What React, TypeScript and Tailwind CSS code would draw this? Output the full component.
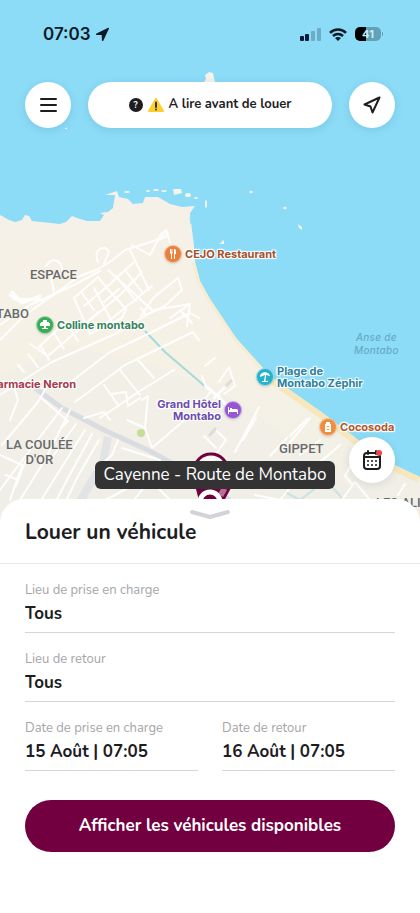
import type { ReactNode } from "react";

const halo =
  "[text-shadow:0_0_2px_#fff,0_0_2px_#fff,1px_1px_1px_#fff,-1px_-1px_1px_#fff,1px_-1px_1px_#fff,-1px_1px_1px_#fff]";
const district =
  "absolute text-center text-[13px] leading-[15px] font-medium whitespace-nowrap text-[#68696b] font-['Roboto',sans-serif]";
const poi = "absolute flex items-center gap-[3px] whitespace-nowrap text-[11px] leading-3 font-bold font-['Inter',sans-serif]";

function MapCanvas() {
  return (
    <svg
      className="absolute inset-0 h-full w-full"
      viewBox="0 0 420 523"
      preserveAspectRatio="xMidYMin slice"
      fill="none"
      aria-hidden="true"
    >
      <defs>
        <linearGradient id="land" x1="0" y1="200" x2="0" y2="520" gradientUnits="userSpaceOnUse">
          <stop stopColor="#f6f1e8" />
          <stop offset="0.5" stopColor="#f5f1e5" />
          <stop offset="1" stopColor="#f1efe6" />
        </linearGradient>
        <clipPath id="coast">
          <path d="M0 215 9 220 15 222 22 220 25 215 29 216 32 221 60 224 66 222 72 216 80 219 87 221 100 221 104 215 100 213 108 212 113 208 115 195 105 195 117 191 119 197 128 199 133 204 143 203 145 197 158 197 170 204 182 207 195 206 190 213 192 230 194 246 195 262 200 281 210 299 236 338 270 376 320 411 357 439 388 462 420 477V523H0Z" />
        </clipPath>
      </defs>
      <rect width="420" height="523" fill="#8cdcf7" />
      <g clipPath="url(#coast)">
        <rect width="420" height="523" fill="url(#land)" />
        <path d="M195 262 200 281 210 299 236 338 270 376" stroke="#f8ecd0" strokeWidth="6" />
        <path d="M270 376 320 411 357 439 388 462 420 477" stroke="#f8e6bd" strokeWidth="12" />
        <path d="M0 375 70 345 150 365 220 390 290 440 340 480 420 523H0Z" fill="#eeede9" opacity=".4" />
        <path d="M145 331 165 352 207 388" stroke="#a5d9da" strokeWidth="2" />
        <path d="M285 492 300 500 326 480 348 505 390 515" stroke="#c9e2e2" strokeWidth="2" />

        {/* main avenue */}
        <path d="M35 388 62 408 108 432 150 451 205 482 260 523" stroke="#d9dce0" strokeWidth="5" strokeLinejoin="round" />
        <path d="M108 437 103 462 78 505" stroke="#e2e3e5" strokeWidth="8" />

        {/* streets */}
        <g stroke="#fff" strokeOpacity=".9" strokeWidth="2" strokeLinejoin="round" strokeLinecap="round">
          <path d="M0 340 25 315 80 276 96 270 110 262 125 250 154 241 168 232" />
          <path d="M0 325 30 305 74 285 100 271" />
          <path d="M132 245 150 255 158 240 168 236M160 235 166 230 170 242" />
          <path d="M98 262C92 248 106 244 109 252L104 264" />
          <path d="M46 266C52 256 63 260 62 272M50 272 54 292" />
          <path d="M10 295 22 303 40 296M14 299 42 300M12 292 20 300" strokeWidth="3" />
          <path d="M74 298 98 277 106 287 126 309 122 318 90 334 74 298Z" />
          <path d="M108 270 152 310M130 250 149 290M84 306 110 284 134 262M90 320 120 295 142 272M100 328 152 286" />
          <path d="M82 293 94 310M94 288 112 322M104 302 119 289M116 276 136 301M125 270 142 292" />
          <path d="M141 316 154 297 178 278 182 290 165 306 146 315 141 308" />
          <path d="M38 348 65 322 80 329 98 312M30 344 48 356 90 320" />
          <path d="M0 395 52 362 115 334 155 310 190 304" />
          <path d="M18 365 24 372M28 354 38 367M40 345 49 360M54 333 64 349M68 325 78 341" />
          <path d="M60 390 110 352 140 338 190 313 199 318" />
          <path d="M75 402 125 365 193 332 199 340" />
          <path d="M100 418 140 391 174 370M120 370 140 395M138 360 154 378M104 385 119 406M111 394 126 392 128 406 140 398" />
          <path d="M142 400 148 396 145 428 152 448 188 417M145 428 127 420" />
          <path d="M170 318 190 304 187 326M180 310 192 323" />
          <path d="M205 366 215 358M202 376 206 388 220 396M219 382 229 367 235 386 224 394M212 390 206 398" />
          <path d="M214 398 224 388M206 386 226 404" strokeWidth="3" />
          <path d="M204 436 216 448M216 430 226 440 210 462M235 452 259 407M243 440 256 418M284 450 310 418M290 436 307 419M270 456 287 438" />
          <path d="M45 390 38 402 2 445M10 420 18 400 12 380M62 408 30 450 0 490" />
          <path d="M40 397 68 421 62 427M70 410 45 460 20 500" />
          <path d="M85 430 60 470 38 505M92 434 68 478 54 505M99 440 78 476 64 505M76 424 50 460" />
          <path d="M0 455 22 465 10 500M5 475 16 479M26 460 16 486" />
          <path d="M84 418 104 412 110 420M118 440 112 455 95 470M122 448 160 460" />
          <path d="M130 505 150 480 170 500M96 505 128 488M255 495 280 500 296 480M338 505 355 482 370 500M352 484 345 476 351 465M398 495 405 484M320 462 340 445M300 455 320 440" />
        </g>
        <path d="M226 386 232 380M209 436 216 428" stroke="#dcdcd8" strokeWidth="3" />
        <circle cx="141" cy="433" r="4" fill="#c5df9b" />
      </g>

      {/* reefs */}
      <g fill="#f6f3e9">
        <path d="M204 82 206 79 205 75 209 72 213 73 215 82Z" />
        <ellipse cx="127" cy="192" rx="3" ry="1" />
        <ellipse cx="148" cy="191" rx="2" ry="1" />
        <ellipse cx="156" cy="190" rx="3" ry="1" />
        <ellipse cx="164" cy="191" rx="3" ry="1" />
        <path d="M173 189h8l1 4-8 2Z" />
        <ellipse cx="188" cy="195" rx="3" ry="2" />
        <ellipse cx="196" cy="198" rx="2" ry="1" />
        <ellipse cx="206" cy="204" rx="1" ry="4" />
        <ellipse cx="251" cy="192" rx="2" ry="1" />
        <ellipse cx="285" cy="208" rx="2" ry="1" />
        <path d="m298 224 4 3v3l-3-2ZM222 240l2 1v3h-5l3-2ZM65 128h2v1h-2Z" />
      </g>
      <path d="M193 210 190 218 191 224" stroke="#8cdcf7" />
    </svg>
  );
}

function Pin({ className, children }: { className: string; children: ReactNode }) {
  return (
    <span className={`flex size-[18px] shrink-0 items-center justify-center rounded-full border border-white/50 shadow-sm ${className}`}>
      <svg className="size-3" viewBox="0 0 12 12" fill="#fff" stroke="none" aria-hidden="true">
        {children}
      </svg>
    </span>
  );
}

function Places() {
  return (
    <>
      <span className={`${district} left-[30px] top-[267px]`}>ESPACE</span>
      <span className={`${district} right-[calc(100%-29px)] top-[306px]`}>MONTABO</span>
      <span className={`${district} left-[6px] top-[437px]`}>
        LA COULÉE
        <br />
        D'OR
      </span>
      <span className={`${district} left-[279px] top-[441px]`}>GIPPET</span>
      <span className={`${district} left-[376px] top-[495px]`}>LES ALIZÉS</span>
      <span className="absolute left-[354px] top-[331px] text-center font-['Inter',sans-serif] text-[10px] leading-[13px] font-medium tracking-wide whitespace-nowrap text-[#68abc8] italic">
        Anse de
        <br />
        Montabo
      </span>

      <div className={`${poi} ${halo} left-[164px] top-[245px] text-[#a4512b]`}>
        <Pin className="bg-[#e9813c]">
          <path d="M3 1h1v3h.5V1h1v4L5 6v5H4V6L3 5ZM7 1c2 0 2 1 2 5H8v5H7Z" />
        </Pin>
        CEJO Restaurant
      </div>
      <div className={`${poi} ${halo} left-[36px] top-[316px] text-[#34835a]`}>
        <Pin className="bg-[#3bac56]">
          <path d="M4 1h4v2h2v1h1v3H7v2h2v1H3V9h2V7H1V4h1V3h2Z" />
        </Pin>
        Colline montabo
      </div>
      <div className={`${poi} ${halo} right-[calc(100%-76px)] top-[378px] text-[#a63a4b]`}>Pharmacie Neron</div>
      <div className={`${poi} ${halo} left-[256px] top-[365px] text-[#2b7f9f]`}>
        <Pin className="bg-[#28b1cb]">
          <path d="M1 6c0-6 9-6 10-1L7 4l-.5 6H9v1H3v-1h2l1-6Z" />
        </Pin>
        <span>
          Plage de
          <br />
          Montabo Zéphir
        </span>
      </div>
      <div className={`${poi} ${halo} right-[calc(100%-242px)] top-[398px] text-right text-[#6b4bb0]`}>
        <span>
          Grand Hôtel
          <br />
          Montabo
        </span>
        <Pin className="bg-[#9557d3]">
          <path d="M1 3h1v3h1V4h2v1h5l1 1v4h-1V8H2v2H1Z" />
        </Pin>
      </div>
      <div className={`${poi} ${halo} left-[319px] top-[418px] text-[#b0582b]`}>
        <Pin className="bg-[#ef8f3e]">
          <path d="M3 3h1V1h4v2h1v8H3Zm2 2v1h2V5Zm0 3v1h2V8Z" />
        </Pin>
        Cocosoda
      </div>
    </>
  );
}

function StatusBar() {
  return (
    <div className="mb-[38px] flex h-5 items-center justify-between pr-3 pl-[18px] text-[#0b1a24]">
      <div className="flex items-center gap-1 font-['Inter',sans-serif] text-[17px] leading-5 font-semibold">
        07:03
        <svg className="size-[15px]" viewBox="0 0 15 15" fill="currentColor" aria-hidden="true">
          <path d="M14 1.5c.2-.5-.2-.9-.7-.7L1.500 6.400c-.9.4-.6 1.500.2 1.500l5 .2.200 5.200c0 .9 1.200 1 1.500.2Z" />
        </svg>
      </div>
      <div className="flex items-center gap-2">
        <svg className="h-[13px] w-[21px]" viewBox="0 0 21 13" fill="#0b1a3a" aria-hidden="true">
          <rect y="8" width="4" height="5" rx="1" />
          <rect x="5" y="6" width="4" height="7" rx="1" />
          <rect x="11" y="3" width="4" height="10" rx="1" opacity=".25" />
          <rect x="17" width="4" height="13" rx="1" opacity=".25" />
        </svg>
        <svg className="h-[13px] w-[18px]" viewBox="0 0 18 13" fill="none" stroke="currentColor" strokeWidth="2.500" aria-hidden="true">
          <path d="M1 4.800C5.500.4 12.500.4 17 4.800M4 8c2.800-2.800 7.200-2.800 10 0" />
          <path d="M9 13 6 10c1.700-1.500 4.300-1.500 6 0Z" fill="currentColor" stroke="none" />
        </svg>
        <div className="flex items-center gap-px">
          <span className="flex h-[14px] w-[26px] items-center justify-center rounded-[5px] bg-linear-to-r from-black from-42% to-[#62a2b8] to-42% font-['Inter',sans-serif] text-[11px] leading-3 font-bold text-[#c9ecf7]">
            41
          </span>
          <span className="h-1 w-px rounded-r bg-[#62a2b8]" />
        </div>
      </div>
    </div>
  );
}

const fab = "flex size-[46px] shrink-0 items-center justify-center rounded-full bg-white shadow-[0_2px_10px_rgba(0,60,90,0.12)]";

function TopBar() {
  return (
    <div className="flex gap-[17px]">
      <button className={fab} aria-label="Menu">
        <svg className="size-[18px]" viewBox="0 0 18 18" stroke="#1d1d1f" strokeWidth="2" strokeLinecap="round" aria-hidden="true">
          <path d="M2 3h15M2 9h15M2 15h15" />
        </svg>
      </button>
      <button className="flex h-[46px] flex-1 items-center justify-center gap-[5px] rounded-full bg-white text-[13px] font-bold shadow-[0_2px_10px_rgba(0,60,90,0.12)]">
        <span className="flex size-[14px] items-center justify-center rounded-full bg-[#1d1d1f] text-[9px] leading-none text-white">?</span>
        <svg className="h-[14px] w-4" viewBox="0 0 16 14" aria-hidden="true">
          <path d="M8 1 15 13H1Z" fill="#fbd02e" stroke="#fbd02e" strokeWidth="2" strokeLinejoin="round" />
          <path d="M8 4.500v4.500" stroke="#333" strokeWidth="2" strokeLinecap="round" />
          <circle cx="8" cy="11.500" r="1" fill="#333" />
        </svg>
        A lire avant de louer
      </button>
      <button className={fab} aria-label="Ma position">
        <svg className="size-[18px]" viewBox="0 0 18 18" fill="none" stroke="#1d1d1f" strokeWidth="2" strokeLinejoin="round" aria-hidden="true">
          <path d="M16.500 1.500 1.500 8.500 7.500 10.500 9.500 16.500Z" />
        </svg>
      </button>
    </div>
  );
}

function StationMarker() {
  return (
    <div className="absolute top-[451px] left-[95px] flex w-60 flex-col items-center">
      <svg className="absolute top-0 left-[92px] h-[60px] w-12" viewBox="0 0 48 60" fill="none" aria-hidden="true">
        <circle cx="24" cy="20" r="17" fill="#fff" fillOpacity=".5" stroke="#720041" strokeWidth="3" />
        <path d="M8 34h32l4 3-7 13H12Z" fill="#720041" />
        <path d="m35 36 5 3-4 7-5-3Z" fill="#b66d96" />
        <circle cx="23" cy="51" r="10" fill="#720041" stroke="#fff" strokeWidth="5" />
      </svg>
      <span className="relative mt-[10px] flex h-7 w-full items-center justify-center rounded-md bg-[#333334] text-[17px] whitespace-nowrap text-white">
        Cayenne - Route de Montabo
      </span>
    </div>
  );
}

function Field({ id, label, children }: { id: string; label: string; children: ReactNode }) {
  return (
    <div className="flex h-[51px] min-w-0 flex-col border-b border-[#d6d6d8]">
      <label htmlFor={id} className="text-[13px] leading-4 text-[#a5a5a8]">
        {label}
      </label>
      {children}
    </div>
  );
}

const control = "mt-1 h-6 w-full appearance-none bg-transparent p-0 text-[17px] leading-6 font-bold text-[#1d1d1f] outline-none";

function BookingSheet() {
  return (
    <section className="relative rounded-t-3xl bg-white pb-[61px]">
      <button className="absolute top-[10px] left-1/2 -translate-x-1/2" aria-label="Réduire">
        <svg className="h-3 w-[42px]" viewBox="0 0 42 12" fill="none" stroke="#d2d3d6" strokeWidth="4" strokeLinecap="round" strokeLinejoin="round" aria-hidden="true">
          <path d="M3 3 21 8 39 3" />
        </svg>
      </button>
      <h1 className="border-b border-[#e8e8ea] px-[25px] pt-[21px] pb-[19px] text-[21px] leading-6 font-bold">Louer un véhicule</h1>
      <form className="grid grid-cols-2 gap-x-6 gap-y-[18px] px-[25px] pt-[18px]">
        <div className="col-span-2">
          <Field id="pickup" label="Lieu de prise en charge">
            <select id="pickup" className={control}>
              <option>Tous</option>
            </select>
          </Field>
        </div>
        <div className="col-span-2">
          <Field id="return" label="Lieu de retour">
            <select id="return" className={control}>
              <option>Tous</option>
            </select>
          </Field>
        </div>
        <Field id="pickup-date" label="Date de prise en charge">
          <input id="pickup-date" className={control} defaultValue="15 Août | 07:05" />
        </Field>
        <Field id="return-date" label="Date de retour">
          <input id="return-date" className={control} defaultValue="16 Août | 07:05" />
        </Field>
        <button type="button" className="col-span-2 mt-[11px] h-[52px] rounded-full bg-[#720041] text-[17px] font-bold text-white">
          Afficher les véhicules disponibles
        </button>
      </form>
    </section>
  );
}

export default function App() {
  return (
    <main className="flex min-h-screen flex-col overflow-hidden bg-white font-['Nunito','Lato',sans-serif] text-[#1d1d1f]">
      <div className="relative -mb-6 min-h-80 flex-1 overflow-hidden">
        <MapCanvas />
        <Places />
        <StationMarker />
        <header className="relative px-[25px] pt-6">
          <StatusBar />
          <TopBar />
        </header>
        <button className={`${fab} absolute right-[25px] bottom-10`} aria-label="Mes réservations">
          <svg className="size-5" viewBox="0 0 20 20" fill="none" stroke="#1d1d1f" strokeWidth="2" strokeLinecap="round" aria-hidden="true">
            <rect x="2" y="3" width="16" height="16" rx="3" />
            <path d="M2 7h16M6 1v3M14 1v3" />
            <path d="M6 11h.01M10 11h.01M14 11h.01M6 15h.01M10 15h.01M14 15h.01" />
            <circle cx="17" cy="3" r="3" fill="#e5484d" stroke="none" />
          </svg>
        </button>
      </div>
      <BookingSheet />
    </main>
  );
}
